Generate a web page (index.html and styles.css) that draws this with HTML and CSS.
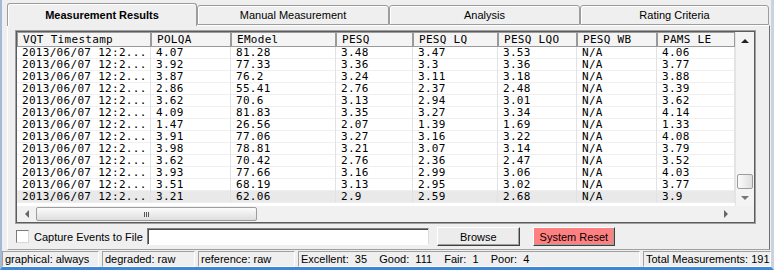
FILE: index.html
```html
<!DOCTYPE html>
<html>
<head>
    <meta charset="utf-8">
    <link rel="stylesheet" href="styles.css">
</head>
<body>
    <div class="window">
        <!-- Tabs -->
        <div class="tabs">
            <div class="tab tab-results active">Measurement Results</div>
            <div class="tab tab-manual">Manual Measurement</div>
            <div class="tab tab-analysis">Analysis</div>
            <div class="tab tab-rating">Rating Criteria</div>
        </div>

        <!-- Tab content -->
        <div class="panel">
            <div class="results">
                <div class="results-main">
                    <div class="grid-wrap">
                        <table class="grid">
                            <thead>
                                <tr>
                                    <th class="c-time">VQT Timestamp</th>
                                    <th class="c-polqa">POLQA</th>
                                    <th class="c-emodel">EModel</th>
                                    <th class="c-pesq">PESQ</th>
                                    <th class="c-lq">PESQ LQ</th>
                                    <th class="c-lqo">PESQ LQO</th>
                                    <th class="c-wb">PESQ WB</th>
                                    <th class="c-pams">PAMS LE</th>
                                </tr>
                            </thead>
                            <tbody>
                                <tr><td>2013/06/07 12:2...</td><td>4.07</td><td>81.28</td><td>3.48</td><td>3.47</td><td>3.53</td><td>N/A</td><td>4.06</td></tr>
                                <tr><td>2013/06/07 12:2...</td><td>3.92</td><td>77.33</td><td>3.36</td><td>3.3</td><td>3.36</td><td>N/A</td><td>3.77</td></tr>
                                <tr><td>2013/06/07 12:2...</td><td>3.87</td><td>76.2</td><td>3.24</td><td>3.11</td><td>3.18</td><td>N/A</td><td>3.88</td></tr>
                                <tr><td>2013/06/07 12:2...</td><td>2.86</td><td>55.41</td><td>2.76</td><td>2.37</td><td>2.48</td><td>N/A</td><td>3.39</td></tr>
                                <tr><td>2013/06/07 12:2...</td><td>3.62</td><td>70.6</td><td>3.13</td><td>2.94</td><td>3.01</td><td>N/A</td><td>3.62</td></tr>
                                <tr><td>2013/06/07 12:2...</td><td>4.09</td><td>81.83</td><td>3.35</td><td>3.27</td><td>3.34</td><td>N/A</td><td>4.14</td></tr>
                                <tr><td>2013/06/07 12:2...</td><td>1.47</td><td>26.56</td><td>2.07</td><td>1.39</td><td>1.69</td><td>N/A</td><td>1.33</td></tr>
                                <tr><td>2013/06/07 12:2...</td><td>3.91</td><td>77.06</td><td>3.27</td><td>3.16</td><td>3.22</td><td>N/A</td><td>4.08</td></tr>
                                <tr><td>2013/06/07 12:2...</td><td>3.98</td><td>78.81</td><td>3.21</td><td>3.07</td><td>3.14</td><td>N/A</td><td>3.79</td></tr>
                                <tr><td>2013/06/07 12:2...</td><td>3.62</td><td>70.42</td><td>2.76</td><td>2.36</td><td>2.47</td><td>N/A</td><td>3.52</td></tr>
                                <tr><td>2013/06/07 12:2...</td><td>3.93</td><td>77.66</td><td>3.16</td><td>2.99</td><td>3.06</td><td>N/A</td><td>4.03</td></tr>
                                <tr><td>2013/06/07 12:2...</td><td>3.51</td><td>68.19</td><td>3.13</td><td>2.95</td><td>3.02</td><td>N/A</td><td>3.77</td></tr>
                                <tr class="selected"><td>2013/06/07 12:2...</td><td>3.21</td><td>62.06</td><td>2.9</td><td>2.59</td><td>2.68</td><td>N/A</td><td>3.9</td></tr>
                            </tbody>
                        </table>
                    </div>
                    <!-- vertical scrollbar -->
                    <div class="vscroll">
                        <div class="sb-btn"><span class="arrow-up"></span></div>
                        <div class="vtrack"><div class="vthumb"></div></div>
                        <div class="sb-btn"><span class="arrow-down"></span></div>
                    </div>
                </div>
                <!-- horizontal scrollbar -->
                <div class="hscroll-row">
                    <div class="hscroll">
                        <div class="sb-btn-h"><span class="arrow-left"></span></div>
                        <div class="htrack">
                            <div class="hthumb"><span class="grip"></span><span class="grip"></span><span class="grip"></span></div>
                        </div>
                        <div class="sb-btn-h"><span class="arrow-right"></span></div>
                    </div>
                    <div class="corner"></div>
                </div>
            </div>

            <!-- capture controls -->
            <div class="capture-row">
                <span class="checkbox"></span>
                <span class="capture-label">Capture Events to File</span>
                <input type="text" class="file-field">
                <button class="btn btn-browse">Browse</button>
                <button class="btn btn-reset">System Reset</button>
            </div>
        </div>

        <!-- Status bar -->
        <div class="statusbar">
            <div class="status s-graph">graphical: always</div>
            <div class="status s-degr">degraded: raw</div>
            <div class="status s-ref">reference: raw</div>
            <div class="status s-scores">Excellent:&nbsp; 35&nbsp;&nbsp;&nbsp; Good:&nbsp; 111&nbsp;&nbsp;&nbsp; Fair:&nbsp; 1&nbsp;&nbsp;&nbsp; Poor:&nbsp; 4</div>
            <div class="status s-total">Total Measurements: 191</div>
        </div>
    </div>
</body>
</html>
```

FILE: styles.css
```css
/* page base */
* {
    box-sizing: border-box;
}

body {
    margin: 0;
    background-color: #efefef;
    font-family: "Liberation Sans", Arial, sans-serif;
    font-size: 11px;
    color: #000;
}

/* window frame */
.window {
    width: 774px;
    height: 270px;
    border-left: 2px solid #a7b8d2;
    border-right: 3px solid #c9d3e2;
    border-bottom: 3px solid #3f86d6;
    background-color: #efefef;
}

/* tabs */
.tabs {
    display: flex;
    align-items: flex-end;
    height: 25px;
    padding-left: 5px;
}

.tab {
    height: 20px;
    border: 1px solid #9c9c9c;
    border-radius: 3px 3px 0 0;
    box-shadow: inset 1px 1px #fff;
    text-align: center;
    line-height: 18px;
    background-color: #efefef;
}

.tab-results { width: 190px; }
.tab-manual { width: 192px; }
.tab-analysis { width: 191px; }
.tab-rating { width: 189px; }

.tab.active {
    position: relative;
    z-index: 1;
    height: 23px;
    margin-bottom: -1px;
    border-bottom: none;
    font-weight: bold;
    line-height: 22px;
}

/* panel under the tabs */
.panel {
    height: 225px;
    margin: 0 1px 0 5px;
    border: 1px solid;
    border-color: #fff #6f6f6f #a0a0a0 #fff;
    padding: 4px 13px 3px 7px;
}

/* results table box */
.results {
    height: 194px;
    border: 1px solid #a0a0a0;
    padding: 1px;
    box-shadow: inset 0 0 0 1px #5c5c5c;
}

.results-main {
    display: flex;
    height: 174px;
}

.grid-wrap {
    width: 718px;
    background-color: #fff;
    overflow: hidden;
}

.grid {
    table-layout: fixed;
    width: 718px;
    border-collapse: separate;
    border-spacing: 0;
    font-family: "DejaVu Sans Mono", monospace;
    font-size: 11px;
    letter-spacing: 0.3px;
}

.grid th {
    height: 15px;
    padding: 0 0 0 5px;
    border: 1px solid #9a9a9a;
    background-color: #f4f4f4;
    font-weight: normal;
    text-align: left;
    line-height: 13px;
    white-space: nowrap;
    overflow: hidden;
}

.grid td {
    height: 12px;
    padding: 0 0 0 5px;
    border-right: 1px solid #e2e2e2;
    box-shadow: inset 0 -1px #efefef;
    line-height: 12px;
    white-space: nowrap;
}

.grid tr.selected td {
    background-color: #e9e9e9;
}

.c-time { width: 134px; }
.c-polqa { width: 80px; }
.c-emodel { width: 105px; }
.c-pesq { width: 77px; }
.c-lq { width: 85px; }
.c-lqo { width: 79px; }
.c-wb { width: 80px; }
.c-pams { width: 78px; }

/* scrollbars */
.vscroll {
    width: 19px;
    display: flex;
    flex-direction: column;
    background-color: #f4f4f4;
    border-left: 1px solid #e4e4e4;
}

.sb-btn {
    height: 17px;
    display: flex;
    justify-content: center;
    align-items: center;
}

.vtrack {
    flex: 1;
    display: flex;
    flex-direction: column;
    justify-content: flex-end;
    padding: 0 1px;
}

.vthumb {
    height: 15px;
    border: 1px solid #9d9d9d;
    border-radius: 2px;
    background: linear-gradient(to right, #fbfbfb, #dedede);
}

.arrow-up {
    border-left: 4px solid transparent;
    border-right: 4px solid transparent;
    border-bottom: 4px solid #222;
}

.arrow-down {
    border-left: 4px solid transparent;
    border-right: 4px solid transparent;
    border-top: 4px solid #777;
}

.hscroll-row {
    display: flex;
    height: 16px;
}

.hscroll {
    width: 718px;
    display: flex;
    background-color: #f1f1f1;
}

.corner {
    flex: 1;
    background-color: #f1f1f1;
}

.sb-btn-h {
    width: 19px;
    display: flex;
    justify-content: center;
    align-items: center;
}

.htrack {
    flex: 1;
    padding: 1px 0;
}

.hthumb {
    width: 221px;
    height: 14px;
    border: 1px solid #9d9d9d;
    border-radius: 2px;
    background: linear-gradient(#fbfbfb, #dedede);
    display: flex;
    justify-content: center;
    align-items: center;
    gap: 1px;
}

.grip {
    width: 1px;
    height: 5px;
    background-color: #555;
}

.arrow-left {
    border-top: 4px solid transparent;
    border-bottom: 4px solid transparent;
    border-right: 4px solid #666;
}

.arrow-right {
    border-top: 4px solid transparent;
    border-bottom: 4px solid transparent;
    border-left: 4px solid #666;
}

/* capture row */
.capture-row {
    display: flex;
    align-items: center;
    height: 19px;
    margin-top: 3px;
}

.checkbox {
    width: 13px;
    height: 13px;
    margin-left: 1px;
    border: 1px solid;
    border-color: #7a7a7a #d8d8d8 #d8d8d8 #7a7a7a;
    background-color: #fff;
}

.capture-label {
    margin-left: 5px;
}

.file-field {
    width: 282px;
    height: 17px;
    margin: 0 0 0 4px;
    padding: 0;
    border: 1px solid;
    border-color: #808080 #dcdcdc #fff #808080;
    box-shadow: inset 1px 1px #4a4a4a;
    background-color: #fff;
}

.btn {
    height: 19px;
    padding: 0;
    border: 1px solid;
    border-color: #fff #404040 #404040 #fff;
    box-shadow: inset -1px -1px #a0a0a0;
    font-family: "Liberation Sans", Arial, sans-serif;
    font-size: 11px;
    color: #000;
}

.btn-browse {
    width: 83px;
    margin-left: 8px;
    background-color: #ececec;
}

.btn-reset {
    width: 82px;
    margin-left: 13px;
    background-color: #ff8080;
}

/* status bar */
.statusbar {
    display: flex;
    gap: 3px;
    height: 16px;
    margin-top: 1px;
}

.status {
    height: 16px;
    padding-left: 2px;
    border: 1px solid;
    border-color: #a0a0a0 #fff #fff #a0a0a0;
    line-height: 14px;
    white-space: nowrap;
    overflow: hidden;
}

.s-graph { width: 97px; }
.s-degr { width: 93px; }
.s-ref { width: 97px; }
.s-scores { width: 342px; }
.s-total { flex: 1; }
```
